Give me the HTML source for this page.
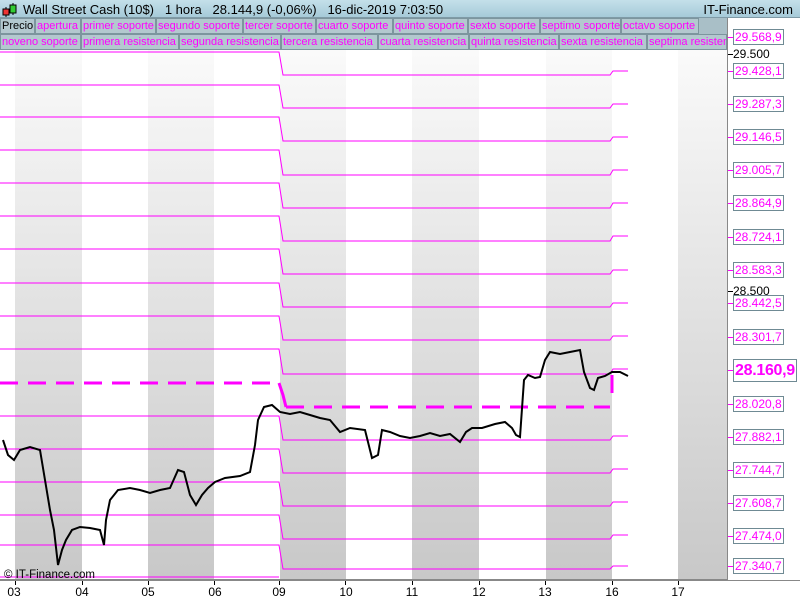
<!DOCTYPE html>
<html><head><meta charset="utf-8"><style>
*{margin:0;padding:0;box-sizing:border-box}
body{width:800px;height:600px;overflow:hidden;background:#fff;font-family:"Liberation Sans",sans-serif;position:relative}
#hdr{position:absolute;left:0;top:0;width:800px;height:18px;background:linear-gradient(#c4e0ea,#a6cad8);border-bottom:1px solid #7f9aa6;font-size:13px;color:#000}
.row{position:absolute;left:0;height:16px;width:727px;background:#a9bfc7;font-size:11px;color:#f0f}
.tab{position:absolute;top:0;height:16px;border:1px solid #7d959e;line-height:14px;padding-left:1px;white-space:nowrap;overflow:hidden;background:#b3c8cf}
#axis{position:absolute;left:727px;top:18px;width:73px;height:562px;background:#fff;border-left:1px solid #888}
.lb{position:absolute;left:5px;height:16px;border:1px solid #6f8a94;background:#fff;color:#f0f;font-size:12px;line-height:14px;padding:0 1px;white-space:nowrap}
.bk{position:absolute;left:5px;font-size:12px;color:#000}
.tick{position:absolute;left:0;width:5px;height:1px;background:#000}
#bottom{position:absolute;left:0;top:580px;width:800px;height:20px;background:#fff;border-top:1px solid #888;font-size:12px}
.d{position:absolute;top:4px;transform:translateX(-50%)}
</style></head><body>
<div id="hdr">
<svg style="position:absolute;left:2px;top:2px" width="16" height="15"><line x1="4" y1="5" x2="4" y2="15" stroke="#000"/><rect x="1" y="7" width="6" height="6" fill="#e33" stroke="#000"/><line x1="11" y1="1" x2="11" y2="13" stroke="#000"/><rect x="8" y="3" width="6" height="8" fill="#3c3" stroke="#000"/></svg>
<span style="position:absolute;left:23px;top:2px">Wall Street Cash (10$) &nbsp;&nbsp;1 hora &nbsp;&nbsp;28.144,9 (-0,06%) &nbsp;&nbsp;16-dic-2019 7:03:50</span>
<span style="position:absolute;right:7px;top:2px">IT-Finance.com</span>
</div>
<div class="row" style="top:18px">
<div class="tab" style="left:0;width:35px;color:#000">Precio</div>
<div class="tab" style="left:35px;width:46px">apertura</div>
<div class="tab" style="left:81px;width:75px">primer soporte</div>
<div class="tab" style="left:156px;width:87px">segundo soporte</div>
<div class="tab" style="left:243px;width:73px">tercer soporte</div>
<div class="tab" style="left:316px;width:77px">cuarto soporte</div>
<div class="tab" style="left:393px;width:75px">quinto soporte</div>
<div class="tab" style="left:468px;width:72px">sexto soporte</div>
<div class="tab" style="left:540px;width:81px">septimo soporte</div>
<div class="tab" style="left:621px;width:78px">octavo soporte</div>
</div>
<div class="row" style="top:34px">
<div class="tab" style="left:0;width:81px">noveno soporte</div>
<div class="tab" style="left:81px;width:98px">primera resistencia</div>
<div class="tab" style="left:179px;width:102px">segunda resistencia</div>
<div class="tab" style="left:281px;width:97px">tercera resistencia</div>
<div class="tab" style="left:378px;width:91px">cuarta resistencia</div>
<div class="tab" style="left:469px;width:90px">quinta resistencia</div>
<div class="tab" style="left:559px;width:88px">sexta resistencia</div>
<div class="tab" style="left:647px;width:80px">septima resistencia</div>
</div>
<svg id="ch" style="position:absolute;left:0;top:50px" width="727" height="530" viewBox="0 50 727 530">
<defs><linearGradient id="g" x1="0" y1="0" x2="0" y2="1"><stop offset="0" stop-color="#fafafa"/><stop offset="1" stop-color="#c8c8c8"/></linearGradient></defs>
<g fill="url(#g)">
<rect x="15" y="50" width="67" height="530"/><rect x="148" y="50" width="66" height="530"/><rect x="280" y="50" width="66" height="530"/><rect x="412" y="50" width="67" height="530"/><rect x="546" y="50" width="66" height="530"/><rect x="678" y="50" width="49" height="530"/>
</g>
<g id="lines" fill="none" stroke="#f0f" stroke-width="1"></g>
<g fill="none" stroke="#f0f" stroke-width="3" stroke-dasharray="18 10">
<path d="M0 383H279"/><path d="M286 407H610"/><path d="M612 375V397"/>
</g>
<path d="M279 383L283 395 286 407" stroke="#f0f" stroke-width="3" fill="none"/>
<polyline id="px" fill="none" stroke="#000" stroke-width="2" points="3,440 8,455 14,460 20,450 30,447 40,450 45,480 50,510 54,530 58,565 62,550 66,540 72,530 80,527 90,528 100,530 104,545 106,520 110,500 118,490 130,488 140,490 150,493 160,490 170,488 178,470 184,472 190,495 196,505 202,495 208,488 215,482 225,478 240,476 250,472 255,445 258,420 264,407 272,405 280,412 290,414 300,412 310,415 320,418 330,420 340,432 350,428 365,430 372,458 378,455 382,430 390,432 400,436 410,438 420,436 430,433 440,436 450,434 460,442 466,432 472,428 482,428 495,424 505,422 512,428 516,435 520,437 524,380 528,375 535,378 540,377 545,360 550,352 560,354 570,352 580,350 584,372 590,388 594,390 598,378 605,376 612,372 620,372 628,376"/>
<line x1="0" y1="579.5" x2="727" y2="579.5" stroke="#888"/>
<text x="4" y="578" font-size="11.5" font-family="Liberation Sans, sans-serif">© IT-Finance.com</text>
</svg>
<div id="axis"></div>
<div id="bottom">
<span class="d" style="left:14px">03</span><span class="d" style="left:82px">04</span><span class="d" style="left:148px">05</span><span class="d" style="left:215px">06</span><span class="d" style="left:279px">09</span><span class="d" style="left:346px">10</span><span class="d" style="left:412px">11</span><span class="d" style="left:479px">12</span><span class="d" style="left:545px">13</span><span class="d" style="left:612px">16</span><span class="d" style="left:678px">17</span>
</div>
<script>
var L=[52,85,117,150,183,216,249,283,316,349,null,416,449,482,515,545,577];
var M=[75,108,141,175,208,241,274,307,340,374,null,440,473,506,539,569,569];
var R=[71,104,137,170,203,236,270,303,336,369,null,436,469,502,535,566,566];
var s="";
for(var i=0;i<L.length;i++){if(L[i]===null)continue;
if(i<16) s+='<path d="M0 '+L[i]+'H279L283 '+M[i]+'H610L613 '+R[i]+'H628"/>';
else s+='<path d="M0 '+L[i]+'H279"/>';}
document.getElementById('lines').innerHTML=s;
var ax=document.getElementById('axis'),h="";
var labs=[[37,"29.568,9"],[71,"29.428,1"],[104,"29.287,3"],[137,"29.146,5"],[170,"29.005,7"],[203,"28.864,9"],[237,"28.724,1"],[270,"28.583,3"],[303,"28.442,5"],[337,"28.301,7"],[404,"28.020,8"],[437,"27.882,1"],[470,"27.744,7"],[503,"27.608,7"],[536,"27.474,0"],[566,"27.340,7"]];
h+='<div class="tick" style="top:'+(54-18)+'px"></div><div class="bk" style="top:'+(47-18)+'px">29.500</div>';
h+='<div class="tick" style="top:'+(291-18)+'px"></div><div class="bk" style="top:'+(284-18)+'px">28.500</div>';
labs.forEach(function(l){h+='<div class="tick" style="background:#f0f;top:'+(l[0]-18)+'px"></div><div class="lb" style="top:'+(l[0]-18-8)+'px">'+l[1]+'</div>';});
h+='<div class="tick" style="background:#f0f;top:'+(370-18)+'px"></div><div class="lb" style="top:'+(370-18-11)+'px;height:23px;font-size:16px;font-weight:bold;line-height:21px;padding:0 1px;letter-spacing:-0.3px">28.160,9</div>';
ax.innerHTML=h;
var b=document.getElementById('bottom'),t="";
[15,82,148,214,279,345,412,479,545,612,678].forEach(function(x){t+='<div style="position:absolute;left:'+x+'px;top:0;width:1px;height:4px;background:#000"></div>';});
b.insertAdjacentHTML('beforeend',t);
</script>
</body></html>
